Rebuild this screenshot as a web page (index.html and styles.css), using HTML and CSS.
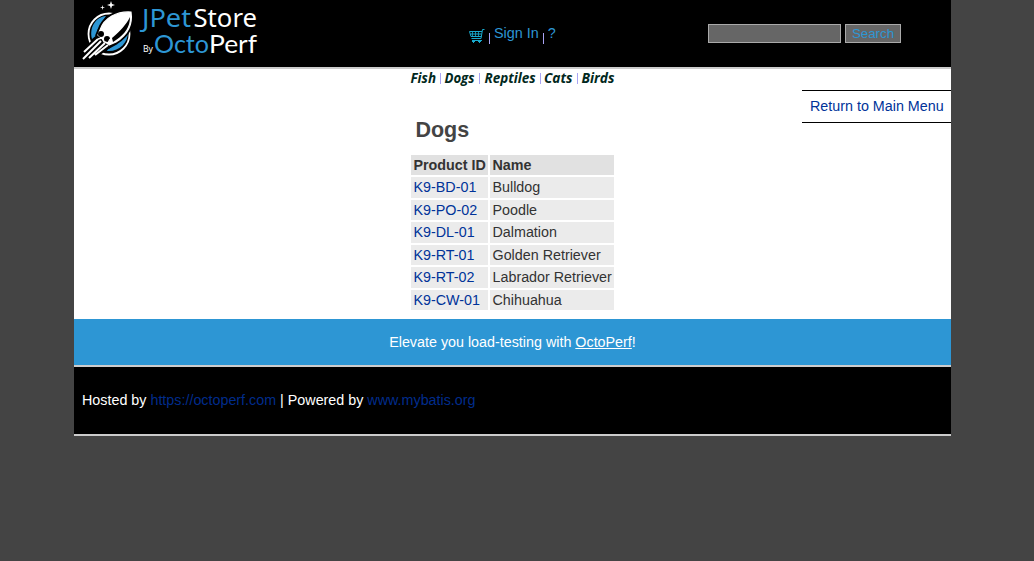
FILE: index.html
```html
<!DOCTYPE html>
<html lang="en">
<head>
<meta charset="utf-8">
<title>JPetStore</title>
<link rel="stylesheet" href="styles.css">
</head>
<body>
<div class="page">
  <header class="header">
    <a class="logo">
      <svg width="196" height="67" viewBox="0 0 196 67">
        <circle cx="35" cy="34" r="20.500" fill="#000" stroke="#fff" stroke-width="1.800"/>
        <path d="M32 16C22 17 15 27 18 39L24 34C25 27 28 21 32 16Z" fill="#2d96d4"/>
        <path d="M54 32C54 43 45 52 33 51L35 46L42 43C47 40 51 36 54 32Z" fill="#2d96d4"/>
        <path d="M57 12C43 11 30 18 26 30L24 35L35 46L42 42C53 35 59 25 57 12Z" fill="#000" stroke="#000" stroke-width="5"/>
        <path d="M57 12C43 11 30 18 26 30L24 35L35 45L42 42C53 35 59 25 57 12Z" fill="#fff" stroke="#fff" stroke-width="1.200"/>
        <path d="M56 17C52 25 46 31 38 38L39 42L42 40C51 34 56 27 56 17Z" fill="#000"/>
        <path d="M24 38L10 51M27 41L10 58M31 44L16 58M35 46L21 56" stroke="#000" stroke-width="4.500"/>
        <path d="M24 39L10 52M27 41L9 59M31 43L15 58M34 45L21 55" stroke="#fff" stroke-width="2"/>
        <circle cx="27" cy="34" r="3" fill="#000"/><circle cx="33" cy="39" r="3" fill="#000"/>
        <path d="M24 39L28 38L30 42L34 43L36 39" stroke="#fff" stroke-width="1.300" fill="none"/>
        <path d="M37 1L38 4L41 5L38 6L37 9L36 6L33 5L36 4ZM28.500 5L29 7L31 7.500L29 8L28.500 10L28 8L26 7.500L28 7Z" fill="#fff"/>
        <text class="logo-noto" x="68" y="26.500" font-size="26" textLength="49" lengthAdjust="spacingAndGlyphs" fill="#2d96d4">JPet</text>
        <text class="logo-noto" x="119.500" y="27" font-size="25.500" textLength="63.500" lengthAdjust="spacingAndGlyphs" fill="#fff">Store</text>
        <text class="logo-noto" x="69" y="52" font-size="9.500" textLength="10" lengthAdjust="spacingAndGlyphs" fill="#fff">By</text>
        <text class="logo-lato" x="80" y="53" font-size="24.500" textLength="55" lengthAdjust="spacingAndGlyphs" fill="#2d96d4">Octo</text>
        <text class="logo-lato" x="135" y="53" font-size="24.500" textLength="48" lengthAdjust="spacingAndGlyphs" fill="#fff">Perf</text>
      </svg>
    </a>
    <nav class="menu">
      <svg class="cart" width="16" height="16" viewBox="0 0 16 16" fill="none" stroke="#18a9cc">
        <path d="M15.500 .5H13.500L12 9.500H2.500M.5 2.500H13M.5 2.500L2 7.500H12.500M3 11.500H13M1.500 5H12.500"/>
        <path d="M3.500 3V8M6.500 3V8M9.500 3V8" stroke-width=".8"/>
        <path d="M3 12.500H6M4.500 11V14M9 12.500H12M10.500 11V14"/>
      </svg>
      <i class="bar"></i><a>Sign In</a><i class="bar"></i><a>?</a>
    </nav>
    <form class="search">
      <input class="field" type="text" aria-label="Keyword"><button class="button" type="button">Search</button>
    </form>
  </header>
  <nav class="quick">
    <svg width="206" height="20" viewBox="0 0 206 20">
      <text x="0.500" y="14" textLength="25.500" lengthAdjust="spacingAndGlyphs">Fish</text>
      <text x="34.500" y="14" textLength="30" lengthAdjust="spacingAndGlyphs">Dogs</text>
      <text x="74.500" y="14" textLength="51" lengthAdjust="spacingAndGlyphs">Reptiles</text>
      <text x="134" y="14" textLength="28.500" lengthAdjust="spacingAndGlyphs">Cats</text>
      <text x="171.500" y="14" textLength="33" lengthAdjust="spacingAndGlyphs">Birds</text>
      <path d="M30.500 4V15M69.500 4V15M130.500 4V15M167.500 4V15" stroke="#a9a4f4"/>
    </svg>
  </nav>
  <main class="content">
    <section class="catalog">
      <h2>Dogs</h2>
      <div class="table">
        <b>Product ID</b><b>Name</b>
        <a>K9-BD-01</a><span>Bulldog</span>
        <a>K9-PO-02</a><span>Poodle</span>
        <a>K9-DL-01</a><span>Dalmation</span>
        <a>K9-RT-01</a><span>Golden Retriever</span>
        <a>K9-RT-02</a><span>Labrador Retriever</span>
        <a>K9-CW-01</a><span>Chihuahua</span>
      </div>
    </section>
    <a class="back">Return to Main Menu</a>
  </main>
  <div class="banner">Elevate you load-testing with&nbsp;<a>OctoPerf</a>!</div>
  <footer class="footer"><p>Hosted by <a>https://octoperf.com</a> | Powered by <a>www.mybatis.org</a></p></footer>
</div>
</body>
</html>
```
FILE: styles.css
```css
* { box-sizing: border-box; }
body {
  margin: 0;
  background: #444;
  color: #333;
  font: 14.32px/17px "Liberation Sans", Arial, sans-serif;
}
.page { width: 877px; margin-left: 74px; background: #fff; }
.header {
  display: grid;
  grid-template-columns: 395px 239px 1fr;
  height: 69px;
  background: #000;
  border-bottom: 2px solid #ccc;
}
.logo svg { display: block; }
.logo-noto { font-family: "Noto Sans", sans-serif; }
.logo-lato { font-family: Lato, sans-serif; }
.menu { display: flex; padding-top: 25px; color: #2d96d4; font-size: 14.4px; }
.cart { margin: 4px 4px 0 0; }
.bar { width: 1px; height: 11px; margin: 8px 4px 0 0; background: #a9a4f4; }
.menu a + .bar { margin-left: 4px; }
.search { display: flex; gap: 4px; padding-top: 24px; }
.field, .button {
  height: 19px;
  padding: 0;
  border: 1px solid #aaa;
  background: #666;
  color: #2d96d4;
  font: 13.33px/17px "Liberation Sans", Arial, sans-serif;
}
.field { width: 133px; }
.button { width: 56px; }
.quick { height: 20px; padding-left: 336px; }
.quick svg { display: block; }
.quick text { font: italic bold 14.5px "Open Sans", sans-serif; fill: #012820; }
.content { display: flex; justify-content: space-between; height: 230px; }
.catalog { width: 203px; margin-left: 337px; }
h2 {
  margin: 29px 0 11.8px 4.4px;
  color: #444;
  font-size: 21.5px;
  line-height: 25px;
}
.table {
  display: grid;
  grid-template-columns: 77px 124px;
  grid-auto-rows: 20.5px;
  gap: 2px;
  line-height: 20.5px;
  white-space: nowrap;
}
.table > * { padding-left: 2.5px; background: #ebebeb; }
.table > b { background: #e1e1e1; }
.table a, .back, .footer a { color: #039; }
.back {
  width: 149px;
  height: 33px;
  margin-top: 1px;
  padding: 7px 0 0 8px;
  border: solid #000;
  border-width: 1px 0;
  white-space: nowrap;
}
.banner {
  display: flex;
  justify-content: center;
  height: 48px;
  padding-top: 15px;
  background: #2d96d4;
  border-bottom: 2px solid #ccc;
  color: #fff;
}
.banner a { text-decoration: underline; }
.footer { height: 69px; padding: 25px 8px; background: #000; border-bottom: 2px solid #ccc; color: #fff; }
.footer p { margin: 0; }
.footer a { color: #002c8c; }
```
